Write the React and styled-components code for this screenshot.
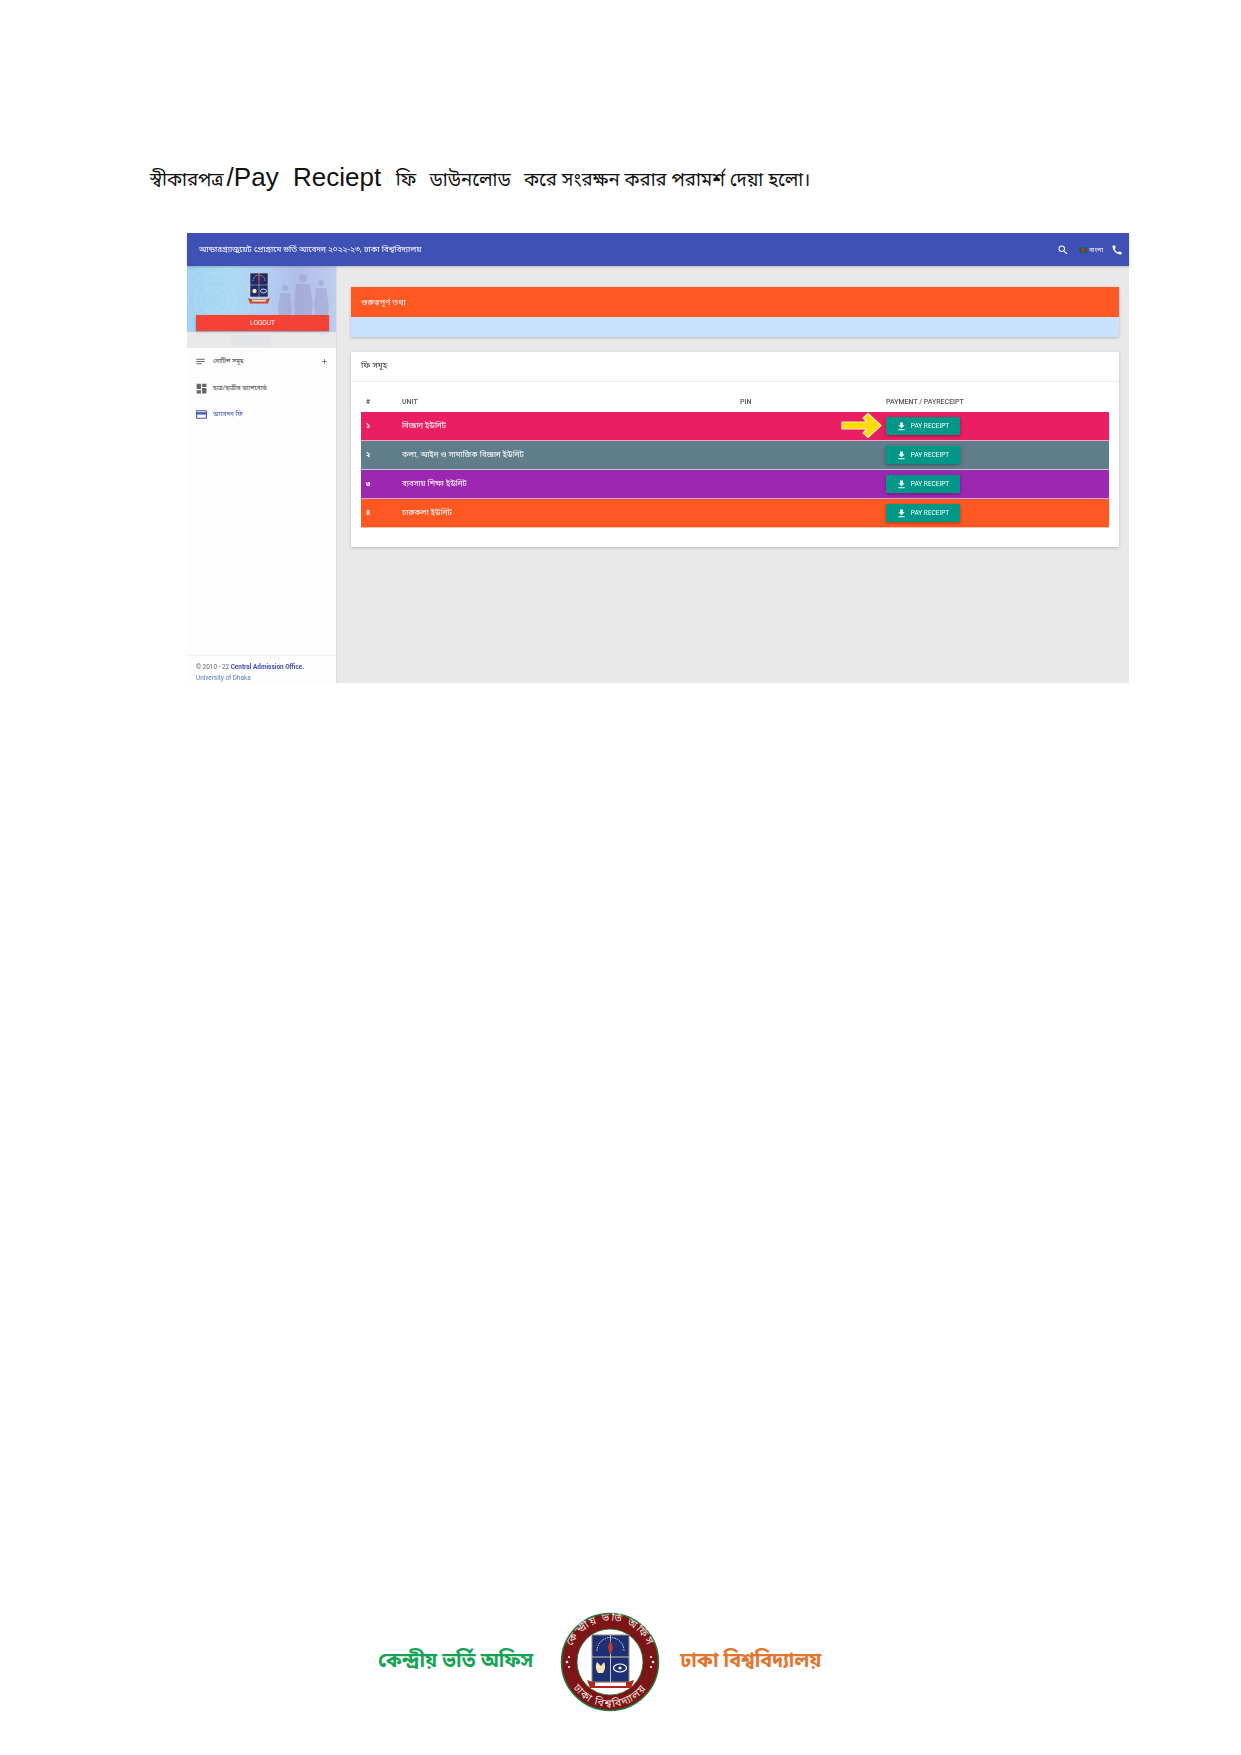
import React from 'react'
import styled, { createGlobalStyle } from 'styled-components'
import { MdSearch, MdCall, MdFileDownload, MdCreditCard, MdDashboard, MdNotes, MdAdd } from 'react-icons/md'

const bangla = '"Noto Sans Bengali", "Noto Sans", "Liberation Sans", sans-serif'

const Global = createGlobalStyle`
  html, body {
    margin: 0;
    padding: 0;
    background: #fff;
    font-family: ${ bangla };
  }
`

const Page = styled.div`
  width: 1241px;
  height: 1755px;
  display: flex;
  flex-direction: column;
  overflow: hidden;
`

const Heading = styled.h1`
  margin: 160px 0 0 150px;
  height: 34px;
  line-height: 34px;
  font-size: 18.6px;
  font-weight: 400;
  color: #111;
  white-space: pre;
  & span {
    font-family: "Liberation Sans", sans-serif;
    font-size: 26px;
    margin-left: 3px;
  }
`

const Shot = styled.div`
  margin: 39px 0 0 187px;
  width: 942px;
  height: 450px;
  display: flex;
  flex-direction: column;
  background: #e9e9e9;
  filter: blur(0.45px);
`

const TopBar = styled.header`
  flex: 0 0 33px;
  background: #3f51b5;
  box-shadow: 0 1px 2px rgba(0, 0, 0, 0.2);
  color: #fff;
  display: flex;
  align-items: center;
  padding: 0 6px 0 12px;
  font-size: 8.2px;
  z-index: 1;
`

const Title = styled.div`
  flex: 1;
`

const TopTools = styled.div`
  display: flex;
  align-items: center;
  font-size: 6px;
  & svg {
    display: block;
  }
`

const Flag = styled.span`
  width: 8px;
  height: 6px;
  margin: 0 2px 0 10px;
  background: #0b6b4f;
  display: flex;
  align-items: center;
  justify-content: center;
  &::after {
    content: '';
    width: 4px;
    height: 4px;
    border-radius: 50%;
    background: #d8203a;
  }
`

const LangText = styled.span`
  margin-right: 8px;
`

const Body = styled.div`
  flex: 1;
  display: flex;
  min-height: 0;
`

const Sidebar = styled.aside`
  flex: 0 0 149px;
  display: flex;
  flex-direction: column;
  background: #fdfdfd;
  box-shadow: 1px 0 1px rgba(0, 0, 0, 0.06);
`

const Hero = styled.div`
  height: 66px;
  padding: 6px 0 1px 9px;
  box-sizing: border-box;
  background: linear-gradient(90deg, #9fd3f1 0%, #acd9f3 30%, #b3cdf0 55%, #b4bde8 75%, #bccdee 100%);
  display: flex;
  flex-direction: column;
  position: relative;
`

const HeroArt = styled.svg`
  position: absolute;
  left: 0;
  top: 0;
`

const Crest = styled.svg`
  display: block;
  margin-left: 52px;
  position: relative;
`

const Logout = styled.div`
  margin-top: auto;
  width: 133px;
  height: 16px;
  line-height: 16px;
  background: #f44336;
  color: #fff;
  text-align: center;
  font-family: Roboto, sans-serif;
  font-size: 6.5px;
  box-shadow: 0 1px 2px rgba(0, 0, 0, 0.25);
  position: relative;
`

const UserStrip = styled.div`
  height: 16px;
  background: #e9e9e9;
  display: flex;
  align-items: center;
  padding-left: 44px;
`

const UserBlur = styled.div`
  width: 40px;
  height: 10px;
  background: #e2e4e6;
`

const Menu = styled.nav`
  flex: 1;
  display: flex;
  flex-direction: column;
`

const MenuItem = styled.div`
  height: 26.7px;
  display: flex;
  align-items: center;
  padding: 0 7px 0 8px;
  font-size: 6.4px;
  color: ${ ({ $active }) => ($active ? '#3f51b5' : '#444') };
  & svg {
    flex: 0 0 auto;
    color: ${ ({ $active }) => ($active ? '#3f51b5' : '#666') };
  }
`

const IconSlot = styled.span`
  flex: 0 0 18px;
  display: flex;
  align-items: center;
`

const MenuLabel = styled.span`
  flex: 1;
`

const SideFoot = styled.footer`
  border-top: 1px solid #f2f2f2;
  padding: 6px 0 0 9px;
  height: 28px;
  box-sizing: border-box;
  font-family: Roboto, sans-serif;
  font-size: 6.4px;
  line-height: 11px;
  color: #666;
  white-space: nowrap;
  & b {
    color: #3f51b5;
    font-weight: 700;
  }
`

const FootUni = styled.div`
  color: #5c7fb5;
`

const Content = styled.main`
  flex: 1;
  padding: 21px 10px 0 15px;
  display: flex;
  flex-direction: column;
`

const InfoCard = styled.section`
  box-shadow: 0 1px 3px rgba(0, 0, 0, 0.2);
  margin-bottom: 15px;
`

const InfoHead = styled.div`
  height: 30px;
  line-height: 31px;
  padding-left: 10px;
  background: #ff5722;
  color: #fff;
  font-size: 8.2px;
`

const InfoBody = styled.div`
  height: 20px;
  background: #c9e2fb;
`

const Card = styled.section`
  height: 195px;
  background: #fff;
  box-shadow: 0 1px 3px rgba(0, 0, 0, 0.2);
`

const CardHead = styled.div`
  height: 29px;
  line-height: 28px;
  padding-left: 10px;
  border-bottom: 1px solid #eee;
  font-size: 8.4px;
  color: #333;
`

const Table = styled.div`
  margin: 0 10px;
  position: relative;
`

const Row = styled.div`
  display: grid;
  grid-template-columns: 41px 338px 146px 1fr;
  align-items: center;
  height: ${ ({ $head }) => ($head ? '30px' : '29px') };
  padding-top: ${ ({ $head }) => ($head ? '9px' : '0') };
  box-sizing: border-box;
  background: ${ ({ $color }) => $color || 'transparent' };
  color: ${ ({ $head }) => ($head ? '#555' : '#fff') };
  border-bottom: ${ ({ $head }) => ($head ? 'none' : '1px solid rgba(255, 255, 255, 0.6)') };
  font-size: ${ ({ $head }) => ($head ? '7px' : '7.9px') };
  font-weight: ${ ({ $head }) => ($head ? 500 : 400) };
  font-family: ${ ({ $head }) => ($head ? 'Roboto, sans-serif' : bangla) };
`

const Num = styled.div`
  padding-left: 5px;
  font-size: 7px;
  font-weight: 700;
`

const PayButton = styled.div`
  width: 74px;
  height: 18px;
  padding-right: 1px;
  box-sizing: border-box;
  background: #009688;
  color: #fff;
  display: flex;
  align-items: center;
  justify-content: center;
  gap: 4px;
  font-family: Roboto, sans-serif;
  font-size: 6.5px;
  box-shadow: 0 1px 3px rgba(0, 0, 0, 0.35);
  & svg {
    display: block;
  }
`

const Arrow = styled.svg`
  position: absolute;
  left: 479px;
  top: 30px;
`

const Footer = styled.footer`
  margin-top: auto;
  margin-bottom: 43px;
  padding-left: 378px;
  display: flex;
  align-items: center;
  gap: 20px;
`

const Office = styled.div`
  font-size: 19.7px;
  font-weight: 700;
  line-height: 30px;
  color: ${ ({ $color }) => $color };
`

const SealArt = styled.svg`
  margin-left: 7px;
`

const rows = [
  { n: '১', unit: 'বিজ্ঞান ইউনিট', color: '#e91e63' },
  { n: '২', unit: 'কলা, আইন ও সামাজিক বিজ্ঞান ইউনিট', color: '#607d8b' },
  { n: '৩', unit: 'ব্যবসায় শিক্ষা ইউনিট', color: '#9c27b0' },
  { n: '৪', unit: 'চারুকলা ইউনিট', color: '#ff5722' },
]

const CrestIcon = () => (
  <Crest width="22" height="33" viewBox="0 0 22 33">
    <rect x="2" y="1" width="18" height="24" fill="#1f2a6b" stroke="#d9cfae" strokeWidth="0.6" />
    <path d="M2 13h18M11 1v24" stroke="#d9cfae" strokeWidth="0.5" />
    <path d="M5 9a6 6 0 0 1 12 0" fill="none" stroke="#dfe6f2" strokeWidth="0.7" strokeDasharray="1 0.6" />
    <path d="M11 3c1.6 2 1.6 5 0 7c-1.6-2-1.6-5 0-7z" fill="#c0392b" />
    <circle cx="6.500" cy="19" r="2.200" fill="#f4e7b4" />
    <ellipse cx="15.500" cy="19" rx="3" ry="2" fill="none" stroke="#fff" strokeWidth="0.8" />
    <path d="M0 26l4 1.500h14l4-1.500-2 5.500H2z" fill="#d2452f" />
    <rect x="4" y="28" width="14" height="1.600" fill="#f3d9c0" />
  </Crest>
)

const HeroBackdrop = () => (
  <HeroArt width="149" height="66" viewBox="0 0 149 66">
    <g fill="none" stroke="#e4f4fc" strokeOpacity="0.3" strokeWidth="0.6">
      <circle cx="28" cy="34" r="8" />
      <circle cx="28" cy="34" r="14" />
      <circle cx="28" cy="34" r="20" />
      <circle cx="28" cy="34" r="27" />
      <circle cx="28" cy="34" r="35" />
    </g>
    <g fill="#8c8fbd" opacity="0.35">
      <circle cx="98" cy="22" r="3" />
      <path d="M93 27h10l2 16-3 16h-8l-3-16z" />
      <circle cx="116" cy="12" r="4" />
      <path d="M109 18h14l3 20-3 24h-13l-3-24z" />
      <circle cx="134" cy="17" r="3" />
      <path d="M129 22h10l3 18-3 20h-9l-3-20z" />
    </g>
  </HeroArt>
)

const Seal = () => (
  <SealArt width="100" height="100" viewBox="0 0 100 100">
    <defs>
      <path id="sealTop" d="M9 50a41 41 0 0 1 82 0" />
      <path id="sealBottom" d="M5 50a45 45 0 0 0 90 0" />
    </defs>
    <circle cx="50" cy="50" r="48.500" fill="#7c1515" stroke="#1f7a3a" strokeWidth="1.500" />
    <circle cx="50" cy="50" r="33" fill="#fff" stroke="#1f7a3a" strokeWidth="0.8" />
    <text fontSize="10.500" fill="#f3e3e3" textAnchor="middle" letterSpacing="1.400">
      <textPath href="#sealTop" startOffset="50%">কেন্দ্রীয় ভর্তি অফিস</textPath>
    </text>
    <text fontSize="10.500" fill="#f3e3e3" textAnchor="middle" letterSpacing="1.400">
      <textPath href="#sealBottom" startOffset="50%">ঢাকা বিশ্ববিদ্যালয়</textPath>
    </text>
    <g fill="#fff">
      <circle cx="7" cy="50" r="1.300" />
      <circle cx="9" cy="45" r="1" />
      <circle cx="9" cy="55" r="1" />
      <circle cx="93" cy="50" r="1.300" />
      <circle cx="91" cy="45" r="1" />
      <circle cx="91" cy="55" r="1" />
    </g>
    <rect x="32" y="23" width="37" height="47" fill="#1f2f73" stroke="#8f8a72" strokeWidth="1" />
    <path d="M32 45h37M50.500 23v47" stroke="#c9c4a5" strokeWidth="1" />
    <path d="M50.500 29c3 4 3 9 0 13c-3-4-3-9 0-13z" fill="#c0392b" />
    <path d="M37 39a13.500 13.500 0 0 1 27 0" fill="none" stroke="#dfe6f2" strokeWidth="1" strokeDasharray="1.500 1" />
    <path d="M37 50c-2 4-1 8 1 11h5c2-3 3-7 1-11l-3 4z" fill="#f3e3b0" />
    <ellipse cx="60" cy="56" rx="6.500" ry="4" fill="none" stroke="#fff" strokeWidth="1.200" />
    <circle cx="60" cy="56" r="1.600" fill="#fff" />
    <path d="M27 68l6 2h35l6-2-3 8H30z" fill="#b3261e" />
    <rect x="35" y="70.500" width="31" height="3.500" fill="#fff" />
  </SealArt>
)

export default function App() {
  return (
    <Page>
      <Global />
      <Heading>স্বীকারপত্র<span>/Pay  Reciept</span>   ফি  {'\u2009'}ডাউনলোড  {'\u2009'}করে সংরক্ষন করার পরামর্শ দেয়া হলো।</Heading>
      <Shot>
        <TopBar>
          <Title>আন্ডারগ্র্যাজুয়েট প্রোগ্রামে ভর্তি আবেদন ২০২২-২৩, ঢাকা বিশ্ববিদ্যালয়</Title>
          <TopTools>
            <MdSearch size={12} />
            <Flag />
            <LangText>বাংলা</LangText>
            <MdCall size={12} />
          </TopTools>
        </TopBar>
        <Body>
          <Sidebar>
            <Hero>
              <HeroBackdrop />
              <CrestIcon />
              <Logout>LOGOUT</Logout>
            </Hero>
            <UserStrip><UserBlur /></UserStrip>
            <Menu>
              <MenuItem>
                <IconSlot><MdNotes size={11} /></IconSlot>
                <MenuLabel>নোটিশ সমূহ</MenuLabel>
                <MdAdd size={9} />
              </MenuItem>
              <MenuItem>
                <IconSlot><MdDashboard size={13} /></IconSlot>
                <MenuLabel>ছাত্র/ছাত্রীর ড্যাশবোর্ড</MenuLabel>
              </MenuItem>
              <MenuItem $active>
                <IconSlot><MdCreditCard size={13} /></IconSlot>
                <MenuLabel>আবেদন ফি</MenuLabel>
              </MenuItem>
            </Menu>
            <SideFoot>
              © 2010 - 22 <b>Central Admission Office.</b>
              <FootUni>University of Dhaka</FootUni>
            </SideFoot>
          </Sidebar>
          <Content>
            <InfoCard>
              <InfoHead>গুরুত্বপূর্ণ তথ্য</InfoHead>
              <InfoBody />
            </InfoCard>
            <Card>
              <CardHead>ফি সমূহ</CardHead>
              <Table>
                <Row $head>
                  <Num>#</Num>
                  <div>UNIT</div>
                  <div>PIN</div>
                  <div>PAYMENT / PAYRECEIPT</div>
                </Row>
                { rows.map(row => (
                  <Row key={ row.n } $color={ row.color }>
                    <Num>{ row.n }</Num>
                    <div>{ row.unit }</div>
                    <div />
                    <PayButton><MdFileDownload size={11} />PAY RECEIPT</PayButton>
                  </Row>
                )) }
                <Arrow width="43" height="27" viewBox="0 0 43 27">
                  <path
                    d="M2 10H27L23 6L28 1.500L41 13.500L28 25.500L23 21L27 17H2Z"
                    fill="#ffdb00"
                    stroke="#f7efb5"
                    strokeWidth="1.200"
                    strokeLinejoin="round"
                  />
                </Arrow>
              </Table>
            </Card>
          </Content>
        </Body>
      </Shot>
      <Footer>
        <Office $color="#17a356">কেন্দ্রীয় ভর্তি অফিস</Office>
        <Seal />
        <Office $color="#e2752f">ঢাকা বিশ্ববিদ্যালয়</Office>
      </Footer>
    </Page>
  )
}
